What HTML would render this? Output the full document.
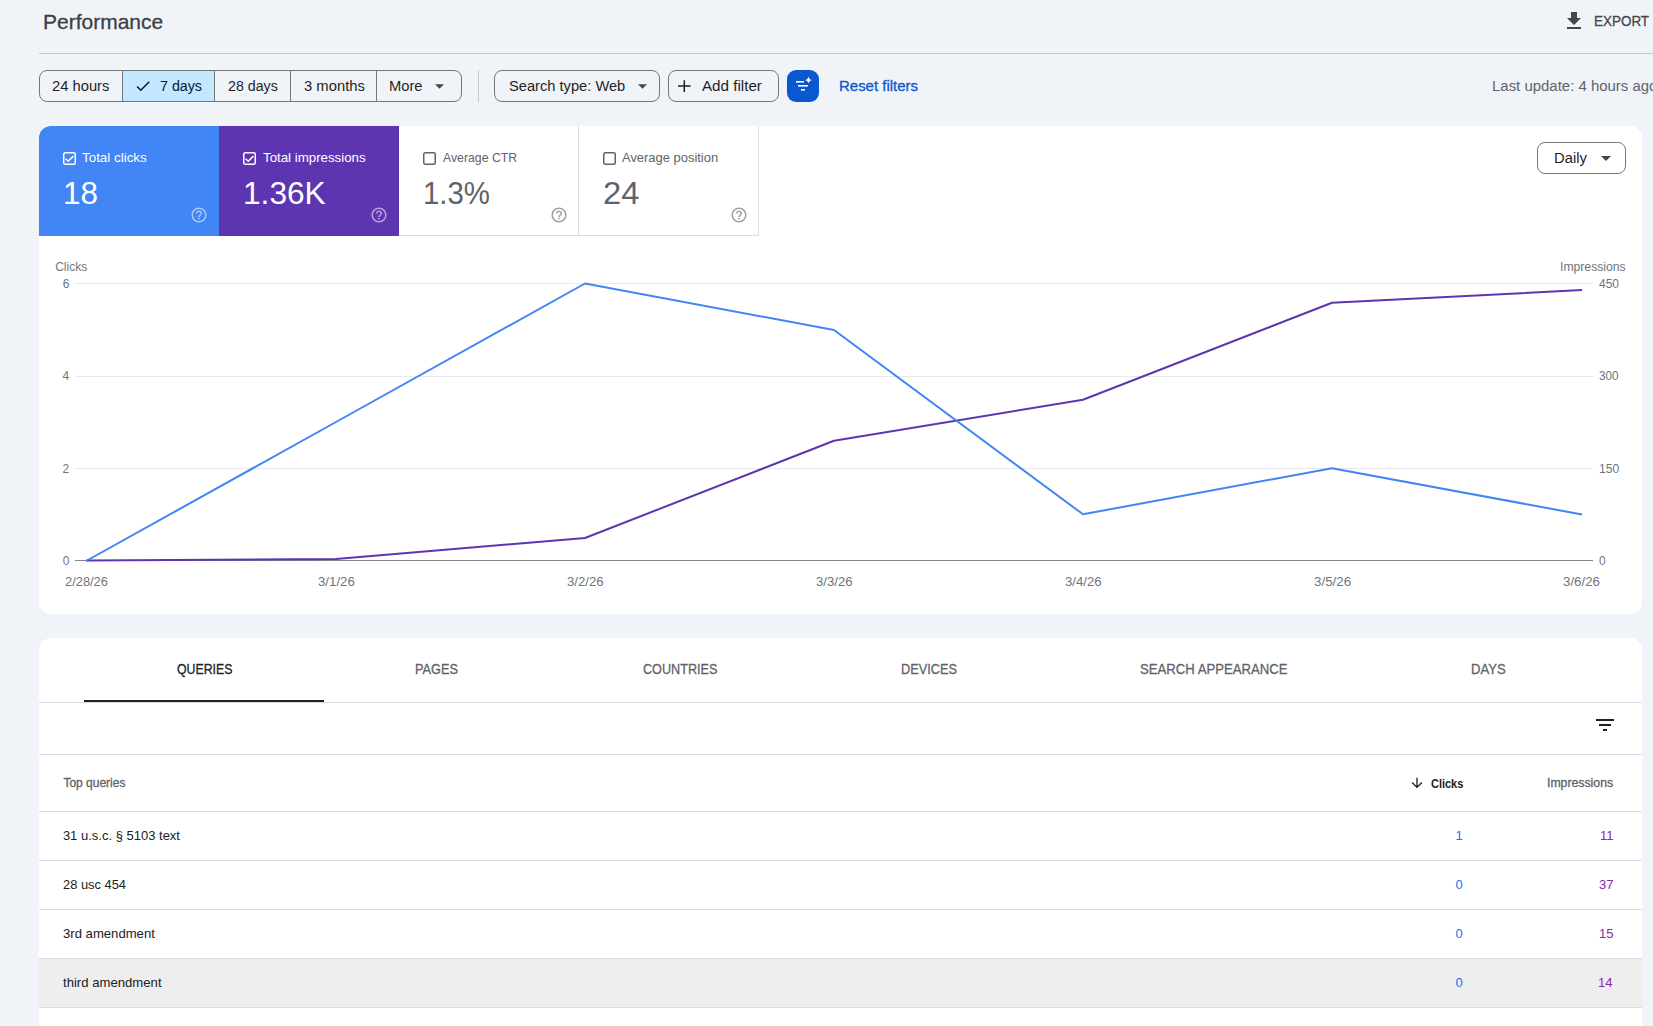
<!DOCTYPE html>
<html><head><meta charset="utf-8">
<style>
*{box-sizing:border-box;margin:0;padding:0}
html,body{width:1653px;height:1026px;overflow:hidden;background:#f0f4f9;font-family:"Liberation Sans",sans-serif;color:#1f1f1f}
.abs{position:absolute}
.t{position:absolute;white-space:nowrap;line-height:1;transform-origin:0 0}
#title{left:44px;top:10px;font-size:21px;color:#1f1f1f}
#hr{left:39px;top:53px;width:1614px;height:1px;background:#c4c7c5}
.seg{position:absolute;top:70px;height:32px;border:1px solid #747775;border-radius:8px;overflow:hidden}
.btn{position:absolute;top:70px;height:32px;border:1px solid #747775;border-radius:8px}
.card{position:absolute;background:#fff}
</style></head><body>
<!-- export -->
<svg class="abs" style="left:1562px;top:9px" width="24" height="24" viewBox="0 0 24 24"><path d="M19 9h-4V3H9v6H5l7 7 7-7zM5 18v2h14v-2H5z" fill="#444746"/></svg>
<div class="abs" id="hr"></div>

<!-- segmented time filter -->
<div class="seg" style="left:39px;width:423px">
  <div class="abs" style="left:82px;top:0;width:92px;height:30px;background:#c2e7ff"></div>
  <div class="abs" style="left:82px;top:0;width:1px;height:30px;background:#747775"></div>
  <div class="abs" style="left:174px;top:0;width:1px;height:30px;background:#747775"></div>
  <div class="abs" style="left:250px;top:0;width:1px;height:30px;background:#747775"></div>
  <div class="abs" style="left:336px;top:0;width:1px;height:30px;background:#747775"></div>
</div>
<svg class="abs" style="left:134px;top:77.2px" width="18" height="18" viewBox="0 0 24 24"><path d="M9 16.17L4.83 12l-1.42 1.41L9 19 21 7l-1.41-1.41z" fill="#001d35"/></svg>
<svg class="abs" style="left:435px;top:84px" width="9" height="5" viewBox="0 0 10 5"><path d="M0 0l5 5 5-5z" fill="#444746"/></svg>
<div class="abs" style="left:478px;top:70px;width:1px;height:32px;background:#c4c7c5"></div>

<div class="btn" style="left:494px;width:166px"></div>
<svg class="abs" style="left:638px;top:84px" width="9" height="5" viewBox="0 0 10 5"><path d="M0 0l5 5 5-5z" fill="#444746"/></svg>

<div class="btn" style="left:668px;width:111px"></div>
<svg class="abs" style="left:676px;top:79px" width="16" height="16" viewBox="0 0 16 16"><path d="M8.3 1.2v11.8M2 7.1h12.6" stroke="#1f1f1f" stroke-width="1.5"/></svg>

<div class="abs" style="left:787px;top:70px;width:32px;height:32px;border-radius:9px;background:#0b57d0"></div>
<svg class="abs" style="left:787px;top:70px" width="32" height="32" viewBox="0 0 32 32">
  <rect x="9" y="11" width="8" height="1.6" fill="#fff"/>
  <rect x="11" y="15" width="10" height="1.6" fill="#fff"/>
  <rect x="14" y="19" width="4" height="1.6" fill="#fff"/>
  <path d="M21.5 6.2 Q21.9 9.6 25.2 10 Q21.9 10.4 21.5 13.8 Q21.1 10.4 17.8 10 Q21.1 9.6 21.5 6.2Z" fill="#fff"/>
</svg>

<!-- chart card -->
<div class="card" style="left:39px;top:126px;width:1603px;height:488px;border-radius:12px"></div>
<div class="abs" style="left:39px;top:126px;width:180px;height:110px;background:#4285f4;border-top-left-radius:12px"></div>
<div class="abs" style="left:219px;top:126px;width:180px;height:110px;background:#5e35b1"></div>
<div class="abs" style="left:399px;top:126px;width:360px;height:110px;border-right:1px solid #dadce0;border-bottom:1px solid #dadce0"></div>
<div class="abs" style="left:578px;top:126px;width:1px;height:110px;background:#dadce0"></div>

<!-- metric cards content -->
<svg class="abs" style="left:62px;top:151px" width="15" height="15" viewBox="0 0 15 15"><rect x="1.75" y="1.75" width="11.5" height="11.5" rx="1.5" fill="none" stroke="#fff" stroke-width="1.5"/><path d="M3.6 7.7l2.6 2.6 5.2-5.2" fill="none" stroke="#fff" stroke-width="1.5"/></svg>
<svg class="abs" style="left:189.5px;top:206px" width="18" height="18" viewBox="0 0 24 24"><path d="M11 18h2v-2h-2v2zm1-16C6.48 2 2 6.48 2 12s4.48 10 10 10 10-4.48 10-10S17.52 2 12 2zm0 18c-4.41 0-8-3.59-8-8s3.59-8 8-8 8 3.59 8 8-3.59 8-8 8zm0-14c-2.21 0-4 1.79-4 4h2c0-1.1.9-2 2-2s2 .9 2 2c0 2-3 1.75-3 5h2c0-2.25 3-2.5 3-5 0-2.21-1.79-4-4-4z" fill="rgba(255,255,255,.55)"/></svg>

<svg class="abs" style="left:242px;top:151px" width="15" height="15" viewBox="0 0 15 15"><rect x="1.75" y="1.75" width="11.5" height="11.5" rx="1.5" fill="none" stroke="#fff" stroke-width="1.5"/><path d="M3.6 7.7l2.6 2.6 5.2-5.2" fill="none" stroke="#fff" stroke-width="1.5"/></svg>
<svg class="abs" style="left:369.5px;top:206px" width="18" height="18" viewBox="0 0 24 24"><path d="M11 18h2v-2h-2v2zm1-16C6.48 2 2 6.48 2 12s4.48 10 10 10 10-4.48 10-10S17.52 2 12 2zm0 18c-4.41 0-8-3.59-8-8s3.59-8 8-8 8 3.59 8 8-3.59 8-8 8zm0-14c-2.21 0-4 1.79-4 4h2c0-1.1.9-2 2-2s2 .9 2 2c0 2-3 1.75-3 5h2c0-2.25 3-2.5 3-5 0-2.21-1.79-4-4-4z" fill="rgba(255,255,255,.55)"/></svg>

<svg class="abs" style="left:422px;top:151px" width="15" height="15" viewBox="0 0 15 15"><rect x="1.75" y="1.75" width="11.5" height="11.5" rx="1.5" fill="none" stroke="#5f6368" stroke-width="1.5"/></svg>
<svg class="abs" style="left:549.5px;top:206px" width="18" height="18" viewBox="0 0 24 24"><path d="M11 18h2v-2h-2v2zm1-16C6.48 2 2 6.48 2 12s4.48 10 10 10 10-4.48 10-10S17.52 2 12 2zm0 18c-4.41 0-8-3.59-8-8s3.59-8 8-8 8 3.59 8 8-3.59 8-8 8zm0-14c-2.21 0-4 1.79-4 4h2c0-1.1.9-2 2-2s2 .9 2 2c0 2-3 1.75-3 5h2c0-2.25 3-2.5 3-5 0-2.21-1.79-4-4-4z" fill="#9aa0a6"/></svg>

<svg class="abs" style="left:602px;top:151px" width="15" height="15" viewBox="0 0 15 15"><rect x="1.75" y="1.75" width="11.5" height="11.5" rx="1.5" fill="none" stroke="#5f6368" stroke-width="1.5"/></svg>
<svg class="abs" style="left:729.5px;top:206px" width="18" height="18" viewBox="0 0 24 24"><path d="M11 18h2v-2h-2v2zm1-16C6.48 2 2 6.48 2 12s4.48 10 10 10 10-4.48 10-10S17.52 2 12 2zm0 18c-4.41 0-8-3.59-8-8s3.59-8 8-8 8 3.59 8 8-3.59 8-8 8zm0-14c-2.21 0-4 1.79-4 4h2c0-1.1.9-2 2-2s2 .9 2 2c0 2-3 1.75-3 5h2c0-2.25 3-2.5 3-5 0-2.21-1.79-4-4-4z" fill="#9aa0a6"/></svg>

<!-- daily button -->
<div class="abs" style="left:1537px;top:142px;width:89px;height:32px;border:1px solid #747775;border-radius:8px"></div>
<svg class="abs" style="left:1601px;top:156px" width="10" height="5" viewBox="0 0 10 5"><path d="M0 0l5 5 5-5z" fill="#444746"/></svg>

<!-- chart -->
<svg class="abs" style="left:0;top:0" width="1653" height="620">
  <g stroke="#e8eaed" stroke-width="1">
    <line x1="75" y1="283.5" x2="1593" y2="283.5"/>
    <line x1="75" y1="376.5" x2="1593" y2="376.5"/>
    <line x1="75" y1="468.5" x2="1593" y2="468.5"/>
  </g>
  <line x1="75" y1="560.5" x2="1593" y2="560.5" stroke="#80868b" stroke-width="1"/>
  <polyline fill="none" stroke="#5e35b1" stroke-width="2" stroke-linejoin="round" stroke-linecap="square" points="87,560.5 336,559.1 585,538 834,440.7 1083,399.7 1332,302.8 1581,290.1"/>
  <polyline fill="none" stroke="#4285f4" stroke-width="2" stroke-linejoin="round" stroke-linecap="square" points="87,560.5 336,422 585,283.5 834,330 1083,514.3 1332,468.2 1581,514.3"/>
</svg>

<!-- tabs/table card -->
<div class="card" style="left:39px;top:638px;width:1603px;height:400px;border-radius:12px 12px 0 0"></div>
<div class="abs" style="left:39px;top:702px;width:1603px;height:1px;background:#dadce0"></div>
<div class="abs" style="left:84px;top:700px;width:240px;height:2px;background:#202124"></div>
<svg class="abs" style="left:1593px;top:713px" width="24" height="24" viewBox="0 0 24 24"><path d="M10 18h4v-2h-4v2zM3 6v2h18V6H3zm3 7h12v-2H6v2z" fill="#202124"/></svg>
<div class="abs" style="left:39px;top:754px;width:1603px;height:1px;background:#dadce0"></div>
<svg class="abs" style="left:1409px;top:774.5px" width="16" height="16" viewBox="0 0 24 24"><path d="M20 12l-1.41-1.41L13 16.17V4h-2v12.17l-5.58-5.59L4 12l8 8 8-8z" fill="#202124"/></svg>
<div class="abs" style="left:39px;top:811px;width:1603px;height:1px;background:#dadce0"></div>
<div class="abs" style="left:39px;top:860px;width:1603px;height:1px;background:#dadce0"></div>
<div class="abs" style="left:39px;top:909px;width:1603px;height:1px;background:#dadce0"></div>
<div class="abs" style="left:39px;top:958px;width:1603px;height:49px;background:#eeeeee"></div>
<div class="abs" style="left:39px;top:958px;width:1603px;height:1px;background:#dadce0"></div>
<div class="abs" style="left:39px;top:1007px;width:1603px;height:1px;background:#dadce0"></div>

<div class="t" style="left:43.00px;top:11.00px;font-size:21px;color:#3c4043;-webkit-text-stroke:0.3px currentColor;">Performance</div>
<div class="t" style="left:1593.60px;top:12.80px;font-size:15px;color:#444746;-webkit-text-stroke:0.3px currentColor;transform:scaleX(0.8967);">EXPORT</div>
<div class="t" style="left:52.20px;top:79.20px;font-size:14px;color:#1f1f1f;transform:scaleX(1.0537);">24 hours</div>
<div class="t" style="left:160.30px;top:79.20px;font-size:14px;color:#001d35;transform:scaleX(1.0171);">7 days</div>
<div class="t" style="left:227.50px;top:79.20px;font-size:14px;color:#1f1f1f;transform:scaleX(1.0163);">28 days</div>
<div class="t" style="left:304.00px;top:79.20px;font-size:14px;color:#1f1f1f;transform:scaleX(1.0579);">3 months</div>
<div class="t" style="left:388.65px;top:78.90px;font-size:14px;color:#1f1f1f;transform:scaleX(1.0516);">More</div>
<div class="t" style="left:509.05px;top:79.20px;font-size:14px;color:#1f1f1f;transform:scaleX(1.0473);">Search type: Web</div>
<div class="t" style="left:702.20px;top:79.20px;font-size:14px;color:#1f1f1f;transform:scaleX(1.0836);">Add filter</div>
<div class="t" style="left:838.67px;top:79.00px;font-size:14.5px;color:#0b57d0;-webkit-text-stroke:0.3px currentColor;transform:scaleX(1.0320);">Reset filters</div>
<div class="t" style="left:1491.53px;top:79.00px;font-size:14px;color:#5f6368;transform:scaleX(1.0680);">Last update: 4 hours ago</div>
<div class="t" style="left:82.40px;top:151.00px;font-size:13px;color:#fff;transform:scaleX(1.0302);">Total clicks</div>
<div class="t" style="left:262.80px;top:151.00px;font-size:13px;color:#fff;transform:scaleX(1.0220);">Total impressions</div>
<div class="t" style="left:442.50px;top:151.00px;font-size:13px;color:#5f6368;transform:scaleX(0.9436);">Average CTR</div>
<div class="t" style="left:622.30px;top:151.00px;font-size:13px;color:#5f6368;transform:scaleX(0.9948);">Average position</div>
<div class="t" style="left:63.34px;top:176.80px;font-size:32px;color:#fff;transform:scaleX(0.9818);">18</div>
<div class="t" style="left:243.42px;top:176.80px;font-size:32px;color:#fff;transform:scaleX(0.9889);">1.36K</div>
<div class="t" style="left:423.26px;top:176.80px;font-size:32px;color:#5f6368;transform:scaleX(0.9186);">1.3%</div>
<div class="t" style="left:602.58px;top:176.80px;font-size:32px;color:#5f6368;transform:scaleX(1.0235);">24</div>
<div class="t" style="left:1553.74px;top:151.20px;font-size:14px;color:#1f1f1f;transform:scaleX(1.0600);">Daily</div>
<div class="t" style="left:55.20px;top:260.80px;font-size:12px;color:#70757a;">Clicks</div>
<div class="t" style="left:1559.58px;top:261.30px;font-size:12px;color:#70757a;transform:scaleX(1.0156);">Impressions</div>
<div class="t" style="left:62.70px;top:278.00px;font-size:12px;color:#70757a;">6</div>
<div class="t" style="left:62.50px;top:370.10px;font-size:12px;color:#70757a;">4</div>
<div class="t" style="left:62.50px;top:463.10px;font-size:12px;color:#70757a;">2</div>
<div class="t" style="left:62.70px;top:555.00px;font-size:12px;color:#70757a;">0</div>
<div class="t" style="left:1599.00px;top:278.20px;font-size:12px;color:#70757a;">450</div>
<div class="t" style="left:1599.30px;top:370.10px;font-size:12px;color:#70757a;transform:scaleX(0.9800);">300</div>
<div class="t" style="left:1598.69px;top:463.10px;font-size:12px;color:#70757a;transform:scaleX(1.0105);">150</div>
<div class="t" style="left:1599.00px;top:555.10px;font-size:12px;color:#70757a;">0</div>
<div class="t" style="left:65.30px;top:576.10px;font-size:12px;color:#70757a;transform:scaleX(1.0725);">2/28/26</div>
<div class="t" style="left:317.80px;top:576.10px;font-size:12px;color:#70757a;transform:scaleX(1.1030);">3/1/26</div>
<div class="t" style="left:566.70px;top:576.10px;font-size:12px;color:#70757a;transform:scaleX(1.0970);">3/2/26</div>
<div class="t" style="left:815.70px;top:576.10px;font-size:12px;color:#70757a;transform:scaleX(1.0970);">3/3/26</div>
<div class="t" style="left:1064.70px;top:576.10px;font-size:12px;color:#70757a;transform:scaleX(1.0970);">3/4/26</div>
<div class="t" style="left:1313.60px;top:576.10px;font-size:12px;color:#70757a;transform:scaleX(1.1152);">3/5/26</div>
<div class="t" style="left:1562.60px;top:576.10px;font-size:12px;color:#70757a;transform:scaleX(1.1061);">3/6/26</div>
<div class="t" style="left:176.80px;top:661.40px;font-size:15px;color:#202124;-webkit-text-stroke:0.3px currentColor;transform:scaleX(0.8209);">QUERIES</div>
<div class="t" style="left:415.45px;top:661.40px;font-size:15px;color:#5f6368;-webkit-text-stroke:0.3px currentColor;transform:scaleX(0.8510);">PAGES</div>
<div class="t" style="left:642.70px;top:661.40px;font-size:15px;color:#5f6368;-webkit-text-stroke:0.3px currentColor;transform:scaleX(0.8420);">COUNTRIES</div>
<div class="t" style="left:900.75px;top:661.40px;font-size:15px;color:#5f6368;-webkit-text-stroke:0.3px currentColor;transform:scaleX(0.8500);">DEVICES</div>
<div class="t" style="left:1139.72px;top:661.40px;font-size:15px;color:#5f6368;-webkit-text-stroke:0.3px currentColor;transform:scaleX(0.8760);">SEARCH APPEARANCE</div>
<div class="t" style="left:1470.53px;top:661.40px;font-size:15px;color:#5f6368;-webkit-text-stroke:0.3px currentColor;transform:scaleX(0.8711);">DAYS</div>
<div class="t" style="left:63.40px;top:777.00px;font-size:12px;color:#5f6368;-webkit-text-stroke:0.3px currentColor;">Top queries</div>
<div class="t" style="left:1431.30px;top:777.50px;font-size:12px;color:#202124;font-weight:700;transform:scaleX(0.9143);">Clicks</div>
<div class="t" style="left:1547.18px;top:777.00px;font-size:12px;color:#5f6368;-webkit-text-stroke:0.3px currentColor;transform:scaleX(1.0219);">Impressions</div>
<div class="t" style="left:62.90px;top:829.30px;font-size:13px;color:#202124;">31 u.s.c. § 5103 text</div>
<div class="t" style="left:62.90px;top:878.30px;font-size:13px;color:#202124;transform:scaleX(0.9906);">28 usc 454</div>
<div class="t" style="left:62.90px;top:927.30px;font-size:13px;color:#202124;transform:scaleX(1.0088);">3rd amendment</div>
<div class="t" style="left:62.90px;top:976.30px;font-size:13px;color:#202124;transform:scaleX(1.0102);">third amendment</div>
<div class="t" style="left:1455.60px;top:829.00px;font-size:13px;color:#1a73e8;">1</div>
<div class="t" style="left:1455.60px;top:878.00px;font-size:13px;color:#1a73e8;">0</div>
<div class="t" style="left:1455.60px;top:927.00px;font-size:13px;color:#1a73e8;">0</div>
<div class="t" style="left:1455.60px;top:976.00px;font-size:13px;color:#1a73e8;">0</div>
<div class="t" style="left:1600.00px;top:829.00px;font-size:13px;color:#8e24aa;">11</div>
<div class="t" style="left:1599.00px;top:878.00px;font-size:13px;color:#8e24aa;">37</div>
<div class="t" style="left:1599.00px;top:927.00px;font-size:13px;color:#8e24aa;">15</div>
<div class="t" style="left:1598.00px;top:976.00px;font-size:13px;color:#8e24aa;">14</div>
</body></html>
